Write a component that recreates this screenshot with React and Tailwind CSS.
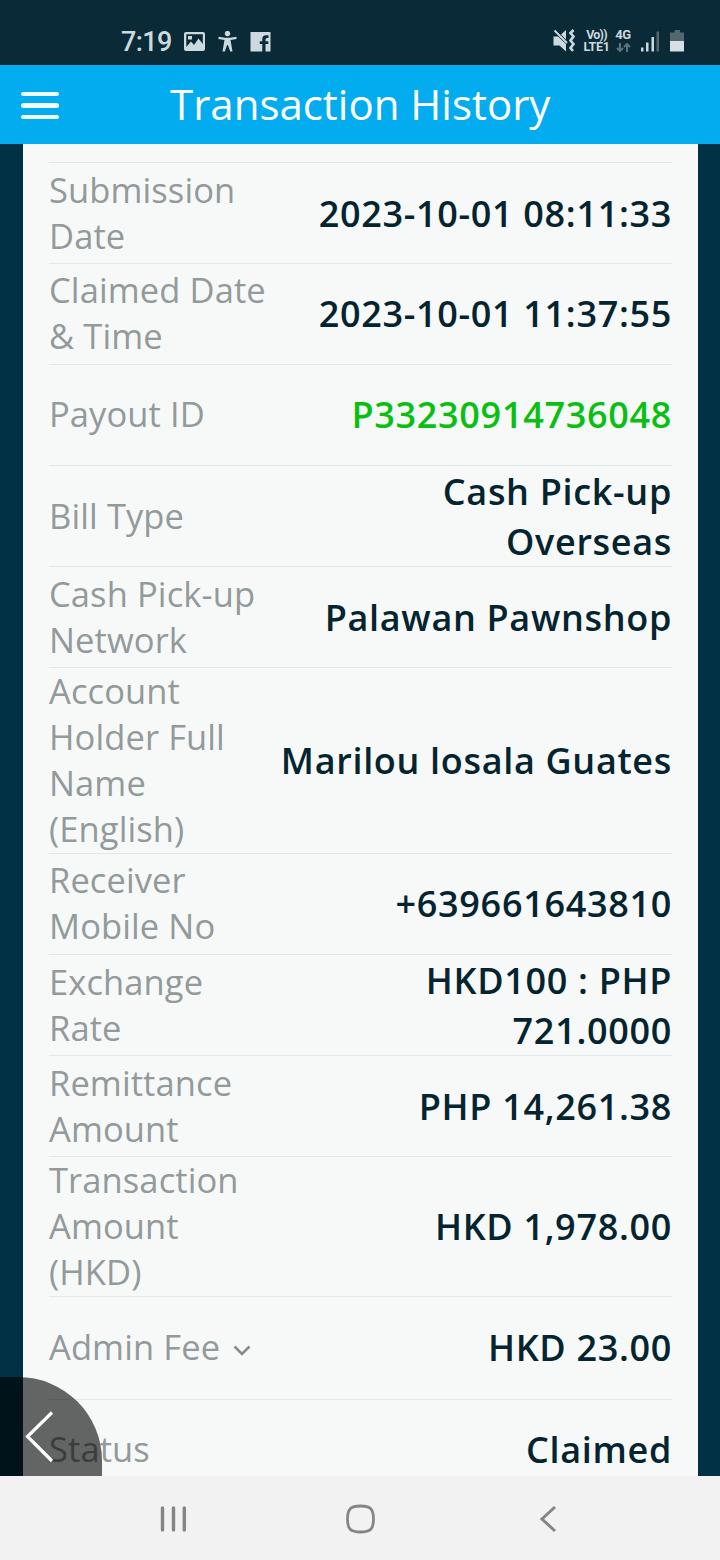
const rows = [
  { h: 'h-[101px]', label: ['Submission', 'Date'], value: ['2023-10-01 08:11:33'], low: true },
  { h: 'h-[101px]', label: ['Claimed Date', '& Time'], value: ['2023-10-01 11:37:55'] },
  { h: 'h-[101px]', label: ['Payout ID'], value: ['P33230914736048'], green: true },
  { h: 'h-[101px]', label: ['Bill Type'], value: ['Cash Pick-up', 'Overseas'], low: true },
  { h: 'h-[101px]', label: ['Cash Pick-up', 'Network'], value: ['Palawan Pawnshop'], low: true },
  { h: 'h-[186px]', label: ['Account', 'Holder Full', 'Name', '(English)'], value: ['Marilou losala Guates'] },
  { h: 'h-[101px]', label: ['Receiver', 'Mobile No'], value: ['+639661643810'] },
  { h: 'h-[101px]', label: ['Exchange', 'Rate'], value: ['HKD100 : PHP', '721.0000'], low: true },
  { h: 'h-[101px]', label: ['Remittance', 'Amount'], value: ['PHP 14,261.38'], low: true },
  { h: 'h-[140px]', label: ['Transaction', 'Amount', '(HKD)'], value: ['HKD 1,978.00'] },
  { h: 'h-[103px]', label: ['Admin Fee'], value: ['HKD 23.00'], chevron: true },
  { h: 'h-[101px]', label: ['Status'], value: ['Claimed'] },
];

function StatusBar() {
  return (
    <div className="flex h-[65px] shrink-0 items-start bg-[#0a2a38] pt-[26px] text-[#ccd9df]">
      <div className="ml-[121px] w-[62px] font-['Roboto',sans-serif] text-[27px] font-medium leading-[32px] tracking-[-0.6px]">7:19</div>
      <svg className="mt-[5px] h-[21px] w-[90px]" viewBox="0 0 90 21" fill="currentColor">
        <path fillRule="evenodd" d="M3 1H20Q22 1 22 3V18Q22 20 20 20H3Q1 20 1 18V3Q1 1 3 1ZM3.3 3.3V16L8 10.5L11 14L15.5 7.5L19.8 13V3.3ZM5 5H9V8.5H5Z" />
        <circle cx="44.5" cy="2.6" r="2.7" />
        <path d="M35.5 5.8L42 6.8H47L53.5 5.8V8L47.5 9L49.500 20.5H47.2L44.9 14H44.1L41.8 20.5H39.5L41.5 9L35.5 8Z" />
        <path d="M67.5 1H87.5V20.5H82.5V13H85.3V10.2H82.5V8.5Q82.5 7 84 7H85.5V4.2H83Q79.3 4.2 79.3 8V10.2H76.8V13H79.3V20.5H67.5Z" />
      </svg>
      <svg className="ml-[280px] mt-[3px] h-[24px] w-[24px]" viewBox="0 0 24 24" fill="currentColor">
        <path d="M0.500 7.5H5L13 15V22.500L6.5 16.500H0.500ZM8 5.500L13 1V10.500Z" />
        <path d="M1.5 1.500L14 14" stroke="currentColor" strokeWidth="2" />
        <path d="M20.500 1L17.500 4L20.500 7.500L17.500 11.500L20.500 15L17.500 19L20 22" fill="none" stroke="currentColor" strokeWidth="2.6" />
      </svg>
      <div className="ml-[5px] mt-[3px] w-[29px] text-center font-['Roboto',sans-serif] text-[12.5px] font-bold leading-[12px]">
        <div className="tracking-[-0.8px]">Vo))</div>
        <div className="tracking-[-0.3px]">LTE1</div>
      </div>
      <div className="ml-[3px] mt-[3px] flex w-[18px] flex-col items-center font-['Roboto',sans-serif] text-[13px] font-bold leading-[12px] tracking-[-0.5px]">
        <span>4G</span>
        <svg className="mt-[2px] h-[9px] w-[15px] text-[#5e727b]" viewBox="0 0 15 9" fill="none" stroke="currentColor" strokeWidth="2">
          <path d="M4 0V8M1 5L4 8L7 5M11 9V1M8 4L11 1L14 4" />
        </svg>
      </div>
      <svg className="ml-[9px] mt-[5px] h-[21px] w-[20px]" viewBox="0 0 20 21" fill="currentColor">
        <path d="M0 16.500H2.500V20.500H0ZM5 11.5H7.500V20.500H5ZM10.5 6H13V20.500H10.5Z" />
        <path d="M15.500 0.5H18V20.500H15.500Z" fill="#536771" />
      </svg>
      <svg className="ml-[9px] mt-[3px] h-[24px] w-[15px]" viewBox="0 0 15 24">
        <path d="M4.5 1H10V3.5H14V12H0V3.5H4.5Z" fill="#536771" />
        <path d="M0 12H14V22.5H0Z" fill="#d6e0e4" />
      </svg>
    </div>
  );
}

function Row({ row }) {
  return (
    <div className={`${row.h} flex shrink-0 items-center justify-between border-b border-[#dfe9e9]`}>
      <div className={`flex items-center whitespace-nowrap text-[34.5px] leading-[46px] tracking-[0.1px] text-[#929a9a] ${row.low ? '' : 'pb-[2px]'}`}>
        <div>{row.label.map((l) => <div key={l}>{l}</div>)}</div>
        {row.chevron && (
          <svg className="ml-[13px] mt-[8px] h-[12px] w-[18px]" viewBox="0 0 18 12" fill="none" stroke="#858d8e" strokeWidth="2.6">
            <path d="M1.5 1.5L9 9L16.500 1.5" />
          </svg>
        )}
      </div>
      <div className={`whitespace-nowrap text-right text-[36px] font-semibold leading-[50px] tracking-[0.68px] ${row.low ? 'relative top-px' : ''} ${row.green ? 'text-[#08bf12]' : 'text-[#042430]'}`}>
        {row.value.map((l) => <div key={l}>{l}</div>)}
      </div>
    </div>
  );
}

export default function App() {
  return (
    <div className="relative flex h-[1560px] w-[720px] flex-col overflow-hidden bg-[#003144] font-['Open_Sans',sans-serif]">
      <StatusBar />
      <header className="flex h-[79px] shrink-0 items-center bg-[#02acef]">
        <div className="ml-[21px] mt-[2px] flex w-[38px] flex-col gap-[7px]">
          <span className="h-[4.500px] rounded-full bg-[#effcff]" />
          <span className="h-[4.500px] rounded-full bg-[#effcff]" />
          <span className="h-[4.500px] rounded-full bg-[#effcff]" />
        </div>
        <h1 className="mb-[2px] ml-[111px] whitespace-nowrap text-[42px] leading-[60px] text-white">Transaction History</h1>
      </header>
      <main className="ml-[23px] mr-[22px] h-[1332px] shrink-0 overflow-hidden bg-[#f7f9f9] px-[26px]">
        <div className="h-[19px] border-b border-[#dfe9e9]" />
        {rows.map((row) => <Row key={row.label[0]} row={row} />)}
      </main>
      <nav className="flex h-[84px] shrink-0 items-center bg-[#f2f2f2] pt-[2px]">
        <svg className="ml-[160px] h-[28px] w-[28px]" viewBox="0 0 28 28" stroke="#858585" strokeWidth="3.4" strokeLinecap="round">
          <path d="M2.5 3V25M13.500 3V25M24.300 3V25" />
        </svg>
        <svg className="ml-[157px] h-[30px] w-[30px]" viewBox="0 0 30 30" fill="none" stroke="#858585" strokeWidth="2.800">
          <path d="M15.500 2C25.500 2 28.500 5 28.500 15S25.500 28 15.500 28S2.500 25 2.500 15S5.500 2 15.500 2Z" />
        </svg>
        <svg className="ml-[164px] h-[28px] w-[18px]" viewBox="0 0 18 28" fill="none" stroke="#858585" strokeWidth="3">
          <path d="M16 2L3 14L16 26" />
        </svg>
      </nav>
      <div className="absolute bottom-[84px] left-0 h-[99px] w-[102px] overflow-hidden rounded-tr-[84px] bg-black/60">
        <svg className="absolute left-[24px] top-[32px] h-[54px] w-[32px]" viewBox="0 0 32 54" fill="none" stroke="#fff" strokeWidth="3.2">
          <path d="M28 3.500L3.500 27.500L28 52" />
        </svg>
      </div>
    </div>
  );
}
